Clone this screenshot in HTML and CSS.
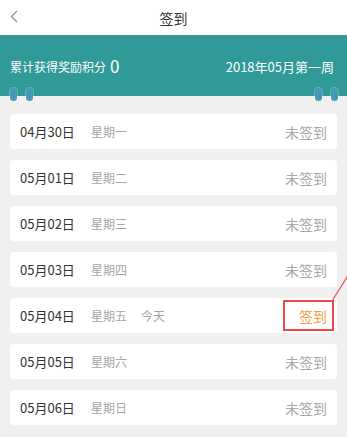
FILE: index.html
```html
<!DOCTYPE html>
<html lang="zh">
<head>
<meta charset="utf-8">
<title>签到</title>
<link rel="stylesheet" href="styles.css">
</head>
<body>
<div class="page">
  <header class="topbar">
    <svg class="back" width="8" height="13" viewBox="0 0 8 13"><polyline points="7,1 1.5,6.5 7,12" fill="none" stroke="#888" stroke-width="1.1"/></svg>
    <h1 class="title">签到</h1>
  </header>
  <section class="banner">
    <div class="points">累计获得奖励积分 <span class="num">0</span></div>
    <div class="week">2018年05月第一周</div>
    <div class="pins pins-left"><i></i><i></i></div>
    <div class="pins pins-right"><i></i><i></i></div>
  </section>
  <ul class="days">
    <li class="day"><span class="date">04月30日</span><span class="wd">星期一</span><span class="status">未签到</span></li>
    <li class="day"><span class="date">05月01日</span><span class="wd">星期二</span><span class="status">未签到</span></li>
    <li class="day"><span class="date">05月02日</span><span class="wd">星期三</span><span class="status">未签到</span></li>
    <li class="day"><span class="date">05月03日</span><span class="wd">星期四</span><span class="status">未签到</span></li>
    <li class="day"><span class="date">05月04日</span><span class="wd">星期五</span><span class="today">今天</span><span class="status sign">签到</span></li>
    <li class="day"><span class="date">05月05日</span><span class="wd">星期六</span><span class="status">未签到</span></li>
    <li class="day"><span class="date">05月06日</span><span class="wd">星期日</span><span class="status">未签到</span></li>
  </ul>
  <svg class="pointer" width="30" height="40" viewBox="0 0 30 40"><line x1="15" y1="39" x2="32" y2="12" stroke="#f04848" stroke-width="1.2"/></svg>
</div>
</body>
</html>
```
FILE: styles.css
```css
* { box-sizing: border-box; }
html, body { margin: 0; padding: 0; }
body {
  background: #f0f0f0;
  font-family: "Noto Sans CJK SC", "Noto Sans", sans-serif;
  width: 347px;
  height: 437px;
  overflow: hidden;
}
.page { position: relative; }
.topbar {
  height: 35px;
  background: #fff;
  display: flex;
  align-items: center;
  justify-content: center;
  position: relative;
}
.back { position: absolute; left: 10px; top: 10px; }
.title {
  margin: 0;
  font-size: 14px;
  font-weight: normal;
  color: #333;
}
.banner {
  position: relative;
  height: 61px;
  background: #2f9a98;
  color: #fff;
  display: flex;
  align-items: center;
  justify-content: space-between;
  padding: 2px 13px 0 10px;
}
.points { font-size: 12px; display: flex; align-items: center; }
.points .num { font-size: 17px; margin-left: 4px; line-height: 1; position: relative; top: -1px; }
.week { font-size: 13px; }
.pins {
  position: absolute;
  top: 53px;
  display: flex;
  gap: 9px;
}
.pins i {
  display: block;
  width: 7px;
  height: 13px;
  border-radius: 4px;
  background: #4699b2;
  box-shadow: 0 0 0 1px rgba(255,255,255,0.25);
}
.pins-left { left: 10px; }
.pins-right { right: 9px; }
.days {
  list-style: none;
  margin: 0;
  padding: 18px 10px 0;
  display: flex;
  flex-direction: column;
  gap: 11px;
}
.day {
  height: 35px;
  background: #fff;
  border-radius: 4px;
  display: flex;
  align-items: center;
  padding: 0 10px;
}
.date { width: 71px; font-size: 13px; color: #333; }
.wd { font-size: 12px; color: #a5a5a5; }
.today { font-size: 12px; color: #a5a5a5; margin-left: 14px; }
.status { margin-left: auto; font-size: 14px; line-height: 20px; color: #a8a8a8; position: relative; }
.status.sign { color: #f5a142; }
.status.sign::after {
  content: "";
  position: absolute;
  left: -16px;
  right: -7px;
  top: -6px;
  bottom: -5px;
  border: 2px solid #f04848;
}
.pointer { position: absolute; left: 317px; top: 262px; }
```
